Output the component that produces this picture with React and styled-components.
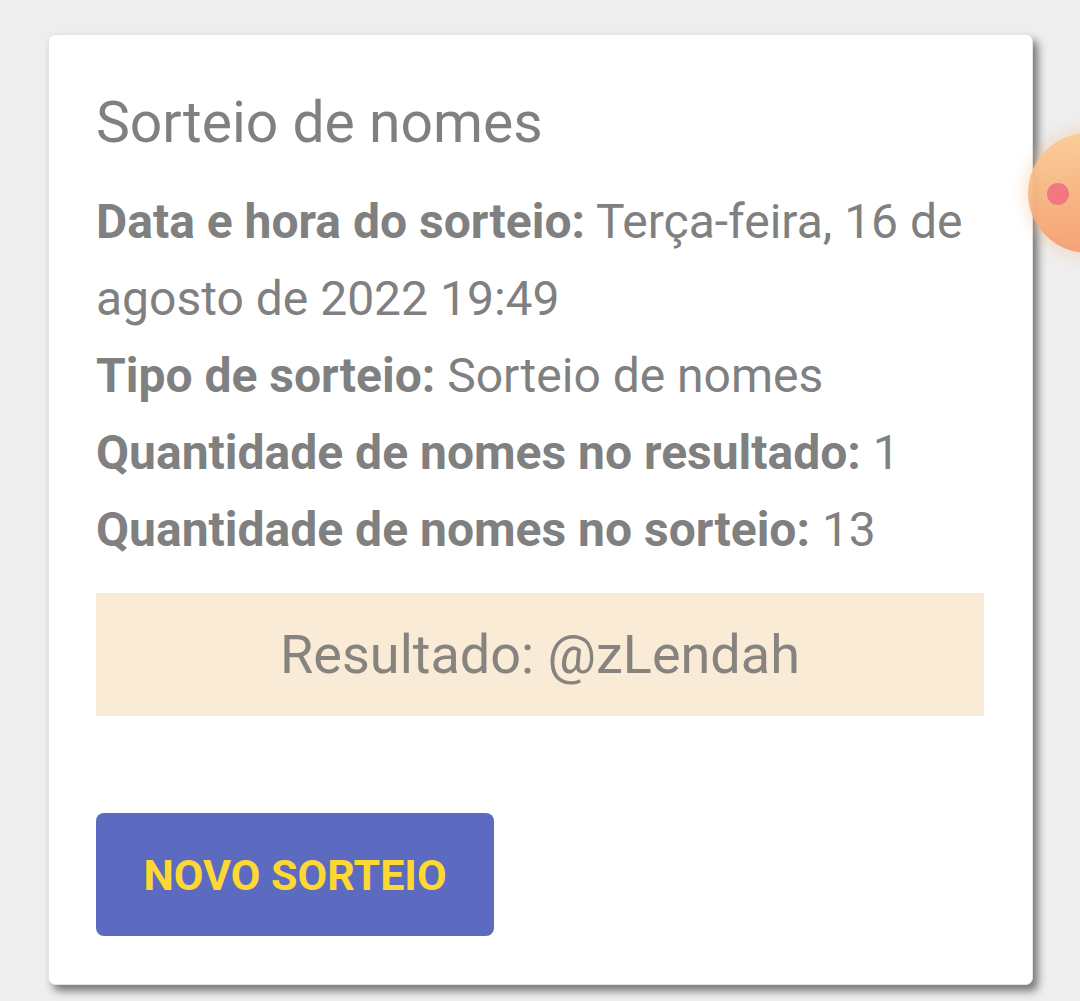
import React from "react";
import styled, { createGlobalStyle } from "styled-components";

const Global = createGlobalStyle`
  html, body {
    margin: 0;
    padding: 0;
    background: #eeeeee;
    overflow: hidden;
  }
  body {
    font-family: Roboto, "Noto Sans", Arial, sans-serif;
  }
`;

const Page = styled.div`
  position: relative;
  width: 1080px;
  height: 1001px;
  padding: 34px 0 0 48px;
  box-sizing: border-box;
  overflow: hidden;
`;

const Card = styled.div`
  box-sizing: border-box;
  width: 985px;
  height: 951px;
  background: #ffffff;
  border: 1px solid #e4e4e4;
  border-radius: 7px;
  box-shadow: 5px 6px 8px rgba(0, 0, 0, 0.5);
  padding: 56px 48px 48px 47px;
  display: flex;
  flex-direction: column;
`;

const Title = styled.h1`
  margin: 0;
  font-size: 57px;
  line-height: 64px;
  font-weight: 400;
  color: #808080;
`;

const Details = styled.div`
  margin-top: 28px;
  font-size: 48px;
  line-height: 77px;
  color: #808080;
`;

const Line = styled.p`
  margin: 0;
`;

const Label = styled.strong`
  font-weight: 700;
`;

const Result = styled.div`
  margin-top: 25px;
  height: 123px;
  background: #faebd7;
  display: flex;
  align-items: center;
  justify-content: center;
  font-size: 54px;
  color: #878480;
`;

const Button = styled.button`
  margin-top: 97px;
  align-self: flex-start;
  height: 123px;
  width: 398px;
  border: none;
  border-radius: 8px;
  background: #5c6bc0;
  color: #fdd835;
  font-family: Roboto, "Noto Sans", Arial, sans-serif;
  font-size: 43px;
  font-weight: 700;
  text-transform: uppercase;
  cursor: pointer;
`;

const Bubble = styled.div`
  position: absolute;
  left: 1028px;
  top: 133px;
  width: 120px;
  height: 120px;
  border-radius: 50%;
  background: linear-gradient(170deg, #fbcf96 0%, #f8b07e 55%, #f59a6e 100%);
  box-shadow: 0 0 12px 6px rgba(250, 190, 140, 0.3);
  opacity: 0.95;
`;

const Dot = styled.div`
  position: absolute;
  left: 19px;
  top: 50px;
  width: 22px;
  height: 22px;
  border-radius: 50%;
  background: #f2727c;
`;

export default function App() {
  return (
    <>
      <Global />
      <Page>
        <Card>
          <Title>Sorteio de nomes</Title>
          <Details>
            <Line>
              <Label>Data e hora do sorteio:</Label> Terça-feira, 16 de agosto de 2022 19:49
            </Line>
            <Line>
              <Label>Tipo de sorteio:</Label> Sorteio de nomes
            </Line>
            <Line>
              <Label>Quantidade de nomes no resultado:</Label> 1
            </Line>
            <Line>
              <Label>Quantidade de nomes no sorteio:</Label> 13
            </Line>
          </Details>
          <Result>Resultado: @zLendah</Result>
          <Button>Novo sorteio</Button>
        </Card>
        <Bubble>
          <Dot />
        </Bubble>
      </Page>
    </>
  );
}
